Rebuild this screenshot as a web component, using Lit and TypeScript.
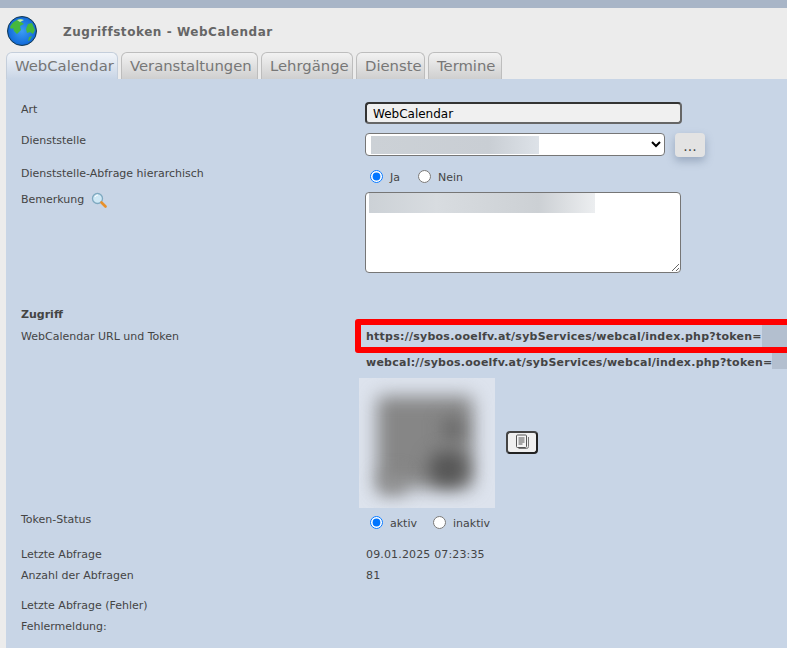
import { LitElement, html, css } from "lit";
import { customElement } from "lit/decorators.js";

@customElement("app-root")
export class AppRoot extends LitElement {
  static styles = css`
    :host { display: block; width: 787px; height: 648px; overflow: hidden; background: #ececec;
      font-family: "DejaVu Sans", Verdana, sans-serif; font-size: 11px; color: #444; }
    .topbar { height: 8px; background: #a8b5c7; }
    .head { height: 44px; padding: 2px 0 0 7px; display: flex; align-items: center; gap: 26px; box-sizing: border-box; }
    .globe { width: 30px; height: 30px; display: block; flex: none; margin-top: -1px; }
    .title { font-weight: bold; font-size: 12px; color: #666; margin-top: 1px; letter-spacing: 0.55px; }
    .tabs { display: grid; grid-template-columns: 112px 137px 92px 69px 74px; gap: 3px; padding-left: 6px; height: 27px; }
    .tab { box-sizing: border-box; height: 27px; padding: 0 0 0 8px; border: 1px solid #bdbdbd; border-bottom: none;
      border-radius: 6px 6px 0 0; font-size: 14.8px; line-height: 26px; color: #777;
      background: linear-gradient(#f2f2f2, #cfcfcf); white-space: nowrap; overflow: hidden; }
    .tab.on { background: linear-gradient(#f2f5f9, #c8d5e6); border-color: #c4cedb; color: #757575; }
    .content { margin-left: 6px; height: 569px; background: #c8d5e6; padding: 23px 0 0 15px; box-sizing: border-box; }
    .row { display: grid; grid-template-columns: 344px 1fr; position: relative; }
    .label { line-height: 13px; white-space: nowrap; padding-top: 1px; }
    .value { padding-left: 1px; letter-spacing: 0.15px; }
    .ctl { position: relative; min-width: 0; }
    input.text { display: block; box-sizing: border-box; width: 317px; height: 22px; margin: 0; padding: 1px 6px 0;
      border: 2px solid #333; border-right-color: #666; border-bottom-color: #666; border-radius: 4px; background: #f0f0f0;
      font: 12px "DejaVu Sans", sans-serif; color: #000; outline: none; }
    .selrow { display: flex; align-items: flex-start; gap: 10px; }
    .sel { position: relative; width: 300px; height: 23px; }
    select { display: block; box-sizing: border-box; width: 300px; height: 23px; margin: 0; border: 1px solid #767676;
      border-radius: 4px; background: #fff; font: 12px "DejaVu Sans", sans-serif; }
    .mask { position: absolute; pointer-events: none; overflow: hidden; background: linear-gradient(90deg, #ccd1d6 0%, #c9ced4 70%, #dde2e8 100%); }
    .sel .mask { left: 6px; top: 3px; width: 168px; height: 18px; }
    .more { box-sizing: border-box; width: 30px; height: 24px; border-radius: 4px; background: #e3e3e3; color: #444;
      font-size: 14px; line-height: 27px; text-align: center; overflow: hidden; box-shadow: 0 4px 8px rgba(80, 100, 130, .4); }
    .radios { display: flex; align-items: center; height: 20px; padding-left: 5px; }
    .radios input { width: 13px; height: 13px; margin: 0 7px 0 0; flex: none; }
    .radios label { line-height: 13px; margin-top: 2px; }
    .radios .gap { width: 18px; }
    .radios .gap2 { width: 16px; }
    .ta { position: relative; width: 316px; height: 81px; }
    textarea { display: block; box-sizing: border-box; width: 316px; height: 81px; margin: 0; border: 1px solid #767676; border-radius: 4px; background: #fff; resize: both; }
    .ta .mask { left: 4px; top: 1px; width: 226px; height: 20px;
      background: linear-gradient(90deg, #ccd1d6, #d8dce0 30%, #ccd0d4 75%, #eceef0 100%); }
    .bem { display: flex; align-items: flex-start; gap: 7px; }
    .lens { width: 16px; height: 16px; display: block; margin-top: -1px; }
    .bold { font-weight: bold; }
    .url { font-weight: bold; white-space: nowrap; line-height: 13px; padding: 1px 0 0 1px; letter-spacing: 0.25px; }
    .tok { position: absolute; left: 397px; top: -4px; width: 30px; height: 22px; background: #b3bfcf; }
    .tok.b { left: 407px; top: -2px; width: 20px; height: 16px; }
    .redbox { position: absolute; left: -10px; top: -10px; width: 450px; height: 34px; box-sizing: border-box;
      border: 6px solid #f00; border-radius: 3px; pointer-events: none; }
    .qrline { display: flex; align-items: flex-start; }
    .qr { width: 136px; height: 130px; margin-left: -6px; background: #dde3ed; overflow: hidden; position: relative; flex: none; }
    .blob { position: absolute; background: #868686; filter: blur(9px); }
    .b1 { left: 18px; top: 18px; width: 96px; height: 92px; border-radius: 6px; }
    .b2 { left: 70px; top: 74px; width: 38px; height: 34px; background: #555; border-radius: 14px; }
    .b3 { left: 84px; top: 42px; width: 20px; height: 18px; background: #636363; }
    .b4 { left: 20px; top: 96px; width: 26px; height: 20px; background: #8a8a8a; }
    .copy { box-sizing: border-box; width: 32px; height: 23px; margin: 53px 0 0 11px; border: 2px solid #222;
      border-top-color: #444; border-left-color: #444; border-radius: 4px; background: #f0f0f0; display: flex; align-items: center; justify-content: center; }
    .copy svg { width: 15px; height: 17px; display: block; }
    .r1 { height: 31px; } .r2 { height: 33px; } .r3 { height: 26px; } .r4 { height: 115px; }
    .r5 { height: 22px; } .r6 { height: 26px; } .r7 { height: 23px; } .r8 { height: 134px; }
    .r9 { height: 35px; } .r10 { height: 21px; } .r11 { height: 30px; } .r12 { height: 21px; }
  `;

  render() {
    return html`
      <div class="topbar"></div>
      <div class="head">
        <svg class="globe" viewBox="0 0 30 30">
          <defs><radialGradient id="g" cx="50%" cy="50%" r="58%"><stop offset="0" stop-color="#3c9cf4"/><stop offset=".75" stop-color="#1670dc"/><stop offset="1" stop-color="#0a4a9c"/></radialGradient></defs>
          <circle cx="15" cy="15" r="14.5" fill="url(#g)" stroke="#123a55" stroke-width="1"/>
          <path d="M3 11c2-5 7-8 12-8l-1 3 3 2-4 2 1 4-4 4-3-3-1-3-2 1z" fill="#45b83c"/>
          <path d="M21 8l4-1 3 7-2 4-3-2-3 1-1-4z" fill="#45b83c"/>
          <path d="M22 21l3-1-2 4-2 1z" fill="#4ab040"/>
          <path d="M10 4c2-1 5-1 7 0l-4 2z" fill="#c4ecb0"/>
        </svg>
        <div class="title">Zugriffstoken - WebCalendar</div>
      </div>
      <div class="tabs">
        <div class="tab on">WebCalendar</div>
        <div class="tab">Veranstaltungen</div>
        <div class="tab">Lehrgänge</div>
        <div class="tab">Dienste</div>
        <div class="tab">Termine</div>
      </div>
      <div class="content">
        <div class="row r1"><div class="label">Art</div><div class="ctl"><input class="text" type="text" value="WebCalendar" /></div></div>
        <div class="row r2"><div class="label">Dienststelle</div><div class="ctl selrow">
          <div class="sel"><select><option> </option></select><div class="mask"></div></div>
          <div class="more">...</div></div></div>
        <div class="row r3"><div class="label">Dienststelle-Abfrage hierarchisch</div><div class="ctl radios">
          <input type="radio" name="h" checked /><label>Ja</label><span class="gap"></span>
          <input type="radio" name="h" /><label>Nein</label></div></div>
        <div class="row r4"><div class="label bem">Bemerkung
          <svg class="lens" viewBox="0 0 16 16"><circle cx="6.5" cy="6.5" r="5" fill="#cfe8f5" stroke="#7fa9c0" stroke-width="1.3"/><path d="M4 5a3 3 0 0 1 3-2" stroke="#fff" fill="none"/><path d="M10.5 10.5l4 4" stroke="#e8902a" stroke-width="2.6" stroke-linecap="round"/></svg></div>
          <div class="ctl"><div class="ta"><textarea></textarea><div class="mask"></div></div></div></div>
        <div class="row r5"><div class="label bold">Zugriff</div><div></div></div>
        <div class="row r6"><div class="label">WebCalendar URL und Token</div><div class="ctl url">https://sybos.ooelfv.at/sybServices/webcal/index.php?token=<span class="tok"></span><span class="redbox"></span></div></div>
        <div class="row r7"><div></div><div class="ctl url">webcal://sybos.ooelfv.at/sybServices/webcal/index.php?token=<span class="tok b"></span></div></div>
        <div class="row r8"><div></div><div class="ctl qrline">
          <div class="qr"><div class="blob b1"></div><div class="blob b3"></div><div class="blob b2"></div><div class="blob b4"></div></div>
          <div class="copy"><svg viewBox="0 0 15 17"><path d="M3.5 14.5h8a2 2 0 0 0 2-2V3" fill="none" stroke="#777"/><rect x="1.5" y="1" width="10" height="12.5" rx="1" fill="#f5f5f5" stroke="#555"/><path d="M3.5 4h6M3.5 6h6M3.5 8h6M3.5 10h4" stroke="#555"/></svg></div>
        </div></div>
        <div class="row r9"><div class="label">Token-Status</div><div class="ctl radios">
          <input type="radio" name="s" checked /><label>aktiv</label><span class="gap2"></span>
          <input type="radio" name="s" /><label>inaktiv</label></div></div>
        <div class="row r10"><div class="label">Letzte Abfrage</div><div class="label value">09.01.2025 07:23:35</div></div>
        <div class="row r11"><div class="label">Anzahl der Abfragen</div><div class="label value">81</div></div>
        <div class="row r12"><div class="label">Letzte Abfrage (Fehler)</div><div></div></div>
        <div class="row"><div class="label">Fehlermeldung:</div><div></div></div>
      </div>
    `;
  }
}
